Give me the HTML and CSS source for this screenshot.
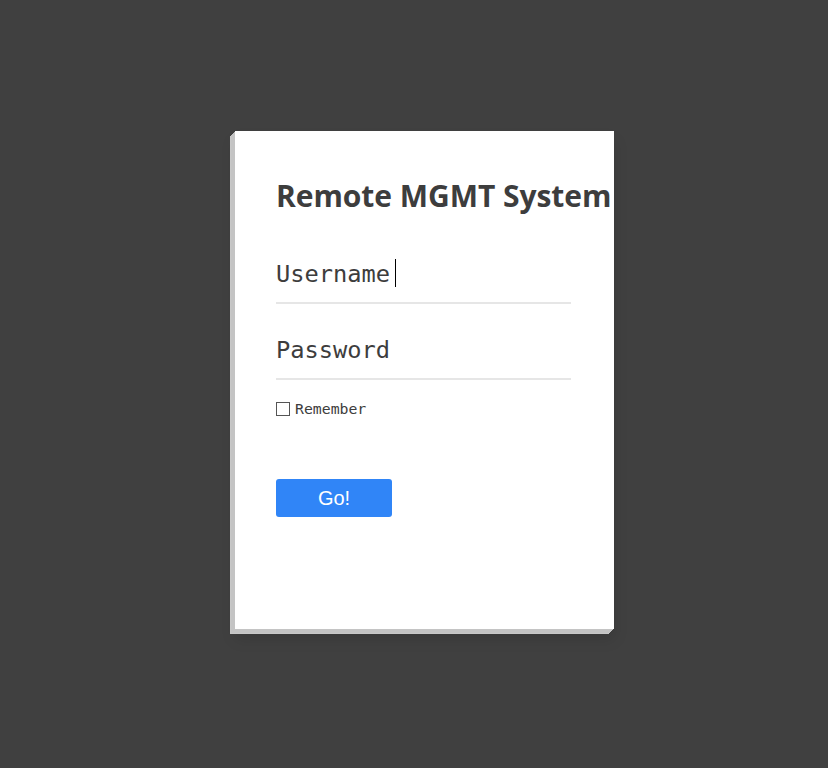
FILE: index.html
```html
<!DOCTYPE html>
<html lang="en">
<head>
    <meta charset="UTF-8">
    <meta name="viewport" content="width=device-width, initial-scale=1.0">
    <title>Remote MGMT System</title>
    <link rel="stylesheet" href="styles.css">
</head>
<body>
    <div class="login-card">
        <h1>Remote MGMT System</h1>

        <form class="login-form" onsubmit="return false;">
            <div class="field">
                <input type="text" name="username" placeholder="Username">
                <span class="caret"></span>
            </div>
            <div class="field">
                <input type="password" name="password" placeholder="Password">
            </div>

            <label class="remember">
                <span class="box"></span>
                Remember
            </label>

            <button type="submit">Go!</button>
        </form>
    </div>
</body>
</html>
```

FILE: styles.css
```css
:root {
    --bg-dark: #404040;
    --text-dark: #3d3d3d;
    --line: #e6e6e6;
    --primary: #3085f7;
    --bevel: #c4c4c4;
}

html {
    background-color: var(--bg-dark);
}

body {
    margin: 0;
    min-height: 100vh;
    padding-top: 131px;
    box-sizing: border-box;
    background-color: var(--bg-dark);
    font-family: 'Open Sans', sans-serif;
}

.login-card {
    width: 338px;
    height: 455px;
    margin-left: 235px;
    padding: 43px 0 0 41px;
    background-color: #fff;
    box-shadow:
        -1px 1px 0 var(--bevel),
        -2px 2px 0 var(--bevel),
        -3px 3px 0 var(--bevel),
        -4px 4px 0 var(--bevel),
        -5px 5px 0 #c8c8c8,
        0 10px 14px rgba(0, 0, 0, 0.12);
}

h1 {
    margin: 0;
    font-size: 30px;
    font-weight: 700;
    line-height: 44px;
    letter-spacing: -0.05px;
    color: var(--text-dark);
    white-space: nowrap;
}

.login-form {
    display: flex;
    flex-direction: column;
    align-items: flex-start;
    width: 295px;
}

.field {
    position: relative;
    width: 100%;
    margin-top: 42px;
}

.field + .field {
    margin-top: 32px;
}

.field input {
    display: block;
    box-sizing: border-box;
    width: 100%;
    height: 44px;
    padding: 0 0 14px;
    border: none;
    border-bottom: 2px solid var(--line);
    outline: none;
    background: transparent;
    font-family: 'DejaVu Sans Mono', monospace;
    font-size: 23.7px;
    line-height: 28px;
    color: var(--text-dark);
}

.field input::placeholder {
    color: var(--text-dark);
    opacity: 1;
}

.caret {
    position: absolute;
    left: 119px;
    top: -1px;
    width: 1px;
    height: 28px;
    background-color: #000;
}

.remember {
    display: flex;
    align-items: center;
    gap: 5px;
    margin-top: 21px;
    font-family: 'DejaVu Sans Mono', monospace;
    font-size: 14.8px;
    line-height: 16px;
    color: var(--text-dark);
}

.box {
    width: 12px;
    height: 12px;
    border: 1px solid #555;
    background-color: #fff;
}

button {
    width: 116px;
    height: 38px;
    margin-top: 62px;
    border: none;
    border-radius: 3px;
    background-color: var(--primary);
    color: #fff;
    font-family: 'Liberation Sans', Arial, sans-serif;
    font-size: 20px;
    cursor: pointer;
}
```
